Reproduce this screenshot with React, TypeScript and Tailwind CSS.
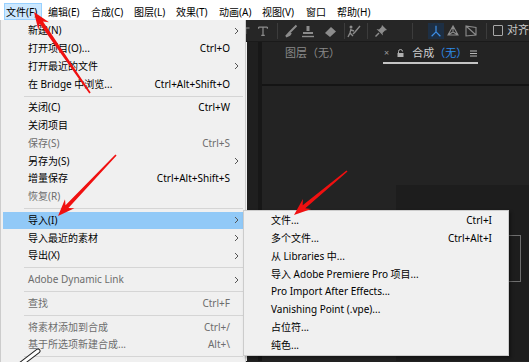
import type { ReactNode } from "react";

type Item =
  | "sep"
  | { label: string; shortcut?: string; sub?: boolean; disabled?: boolean; active?: boolean };

const fileMenu: Item[] = [
  { label: "新建(N)", sub: true },
  { label: "打开项目(O)...", shortcut: "Ctrl+O" },
  { label: "打开最近的文件", sub: true },
  { label: "在 Bridge 中浏览...", shortcut: "Ctrl+Alt+Shift+O" },
  "sep",
  { label: "关闭(C)", shortcut: "Ctrl+W" },
  { label: "关闭项目" },
  { label: "保存(S)", shortcut: "Ctrl+S", disabled: true },
  { label: "另存为(S)", sub: true },
  { label: "增量保存", shortcut: "Ctrl+Alt+Shift+S" },
  { label: "恢复(R)", disabled: true },
  "sep",
  { label: "导入(I)", sub: true, active: true },
  { label: "导入最近的素材", sub: true },
  { label: "导出(X)", sub: true },
  "sep",
  { label: "Adobe Dynamic Link", sub: true, disabled: true },
  "sep",
  { label: "查找", shortcut: "Ctrl+F", disabled: true },
  "sep",
  { label: "将素材添加到合成", shortcut: "Ctrl+/", disabled: true },
  { label: "基于所选项新建合成...", shortcut: "Alt+\\", disabled: true },
  "sep",
];

const importMenu: Item[] = [
  { label: "文件...", shortcut: "Ctrl+I" },
  { label: "多个文件...", shortcut: "Ctrl+Alt+I" },
  { label: "从 Libraries 中..." },
  { label: "导入 Adobe Premiere Pro 项目..." },
  { label: "Pro Import After Effects..." },
  { label: "Vanishing Point (.vpe)..." },
  { label: "占位符..." },
  { label: "纯色..." },
];

const menuBar = [
  { label: "文件(F)", w: "w-[42px]" },
  { label: "编辑(E)", w: "w-[43px]" },
  { label: "合成(C)", w: "w-[43px]" },
  { label: "图层(L)", w: "w-[42px]" },
  { label: "效果(T)", w: "w-[43px]" },
  { label: "动画(A)", w: "w-[43px]" },
  { label: "视图(V)", w: "w-[44px]" },
  { label: "窗口", w: "w-[31px]" },
  { label: "帮助(H)", w: "w-[44px]" },
];

const Chevron = () => (
  <svg width="5" height="8" viewBox="0 0 5 8">
    <path d="M1 1 L4 4 L1 7" fill="none" stroke="#555" strokeWidth="1" />
  </svg>
);

const MenuRows = ({ items, tail }: { items: Item[]; tail: string }) => (
  <>
    {items.map((it, i) =>
      it === "sep" ? (
        <div key={i} className="flex h-[6px] items-center pl-[23px] pr-[2px]">
          <div className="h-px w-full bg-[#d5d5d5]" />
        </div>
      ) : (
        <div
          key={i}
          className={`mx-[2px] flex h-[17.75px] items-center pl-[25px] ${it.active ? "bg-[#91c9f7]" : ""} ${
            it.disabled ? "text-[#6d6d6d]" : "text-black"
          }`}
        >
          <span className="flex-1 whitespace-nowrap">{it.label}</span>
          {it.shortcut && <span className="whitespace-nowrap">{it.shortcut}</span>}
          <span className={`flex ${tail} items-center justify-center`}>{it.sub && <Chevron />}</span>
        </div>
      )
    )}
  </>
);

const Icon = ({ children, w = "w-[16px]" }: { children: ReactNode; w?: string }) => (
  <div className={`flex ${w} h-[22px] items-center justify-center`}>
    <svg width="16" height="16" viewBox="0 0 16 16" fill="none" stroke="#8c8c8c" strokeWidth="1.4">
      {children}
    </svg>
  </div>
);

const Sep = ({ ml }: { ml: string }) => <div className={`${ml} h-[16px] w-px bg-[#3c3c3c]`} />;

// tapered screenshot arrow, tip at (x2, y2)
const Arrow = ({ x1, y1, x2, y2 }: { x1: number; y1: number; x2: number; y2: number }) => {
  const len = Math.hypot(x2 - x1, y2 - y1);
  const dx = (x2 - x1) / len;
  const dy = (y2 - y1) / len;
  const nx = -dy;
  const ny = dx;
  const bx = x2 - dx * 17;
  const by = y2 - dy * 17;
  const ix = x2 - dx * 13;
  const iy = y2 - dy * 13;
  const p = (x: number, y: number) => `${x.toFixed(1)},${y.toFixed(1)}`;
  const pts = [
    p(x1 + nx * 0.8, y1 + ny * 0.8),
    p(ix + nx * 2, iy + ny * 2),
    p(bx + nx * 6.5, by + ny * 6.5),
    p(x2, y2),
    p(bx - nx * 6.5, by - ny * 6.5),
    p(ix - nx * 2, iy - ny * 2),
    p(x1 - nx * 0.8, y1 - ny * 0.8),
  ].join(" ");
  return <polygon points={pts} fill="#f01010" />;
};

export default function App() {
  return (
    <div className="relative h-[362px] w-[529px] overflow-hidden bg-[#232323] font-['Noto_Sans','Noto_Sans_CJK_SC',sans-serif] text-[10px]">
      {/* 메뉴바 */}
      <div className="flex h-[20px] bg-white text-black">
        {menuBar.map((m, i) =>
          i === 0 ? (
            <div key={m.label} className="ml-[4px] mt-[3px] flex h-[17px] w-[38px] items-center border border-[#99d1ff] bg-[#cce8ff] pl-[1px] pt-[1px]">
              {m.label}
            </div>
          ) : (
            <div key={m.label} className={`${m.w} flex items-center pl-[6px] pt-[5px]`}>
              {m.label}
            </div>
          )
        )}
      </div>

      {/* 툴바 */}
      <div className="flex h-[22px] items-center border-b border-[#1a1a1a] bg-[#262626]">
        <div className="ml-[242px]" />
        <Icon w="w-[12px]">
          <path d="M10 4 H5 V12" />
        </Icon>
        <div className="ml-[2px]" />
        <Icon w="w-[14px]">
          <path d="M3 3.5 H13 M8 3.5 V13 M6 13 H10 M3 3.5 V5.5 M13 3.5 V5.5" />
        </Icon>
        <Sep ml="ml-[7px]" />
        <div className="ml-[5px]" />
        <Icon>
          <path d="M13.5 2.5 L7 9 M7 9 L3 13.5 L6.5 12 L8 10" strokeWidth="2" />
        </Icon>
        <div className="ml-[1px]" />
        <Icon>
          <path d="M6.5 3 H9.5 V8 H6.5 Z M3 9 H13 V11 H3 Z M2 13 H14" fill="#8c8c8c" stroke="none" />
          <path d="M2 13.5 H14" />
        </Icon>
        <div className="ml-[7px]" />
        <Icon>
          <polygon points="2,10 8,4 13,8.5 7,14" fill="#8c8c8c" stroke="none" />
        </Icon>
        <Sep ml="ml-[5px]" />
        <div className="ml-[1px]" />
        <Icon>
          <circle cx="5" cy="4" r="1.5" fill="#8c8c8c" stroke="none" />
          <path d="M5 6 L4 10 L2 14 M4 10 L7 13 M5 7 L8 8 M14 3 L9 9 L7 11" />
        </Icon>
        <Sep ml="ml-[5px]" />
        <div className="ml-[5px]" />
        <Icon>
          <path d="M9 2 L14 7 L12 7.5 L9.5 10 L10 12.5 L3.5 6 L6 6.5 L8.5 4 Z" fill="#8c8c8c" stroke="none" />
          <path d="M6 10 L2.5 13.5" />
        </Icon>
        <Sep ml="ml-[23px]" />
        <div className="ml-[16px] flex h-[16px] w-[18px] items-center justify-center bg-[#1d2f44]">
          <svg width="14" height="14" viewBox="0 0 16 16" fill="none" stroke="#3d8fe6" strokeWidth="1.4">
            <path d="M8 9 V2 M8 9 L3 14 M8 9 L13 14" />
          </svg>
        </div>
        <div className="ml-[1px]" />
        <Icon>
          <path d="M8 3 L3 12 H13 Z M8 3 V9 M3 12 L8 9 L13 12" strokeWidth="1.1" />
        </Icon>
        <div className="ml-[2px]" />
        <Icon>
          <path d="M3 3 L13 4.5 V12 L3 13 Z M3 3 L13 12" strokeWidth="1.1" />
        </Icon>
        <Sep ml="ml-[7px]" />
        <div className="ml-[7px] h-[11px] w-[11px] rounded-[1px] border border-[#a8a8a8]" />
        <span className="ml-[4px] whitespace-nowrap text-[11px] text-[#c8c8c8]">对齐</span>
      </div>

      {/* 패널 영역 */}
      <div className="flex h-[319px]">
        <div className="flex w-[262px]">
          <div className="w-[247px] bg-[#f0f0f0]" />
          <div className="w-[11px] bg-[#1f1f1f]" />
          <div className="w-[4px] bg-[#171717]" />
        </div>
        <div className="flex flex-1 flex-col">
          <div className="flex h-[42px] items-start pt-[2px] text-[11px]">
            <div className="ml-[23px] flex h-[18px] items-center text-[#8a8a8a]">图层（无）</div>
            <div className="ml-[43px] flex h-[20px] w-[95px] items-center border-b-2 border-[#c4c4c4] pl-[1px]">
              <span className="text-[9px] text-[#9a9a9a]">×</span>
              <svg className="ml-[8px]" width="7" height="8" viewBox="0 0 7 8">
                <path d="M1.5 4 V2.5 a2 2 0 0 1 4 0" fill="none" stroke="#b0b0b0" strokeWidth="1" />
                <rect x="0.5" y="4" width="6" height="4" fill="#b0b0b0" />
              </svg>
              <span className="ml-[8px] text-[#d0d0d0]">合成</span>
              <span className="text-[#2d8ceb]">（无）</span>
              <svg className="ml-[3px]" width="7" height="7" viewBox="0 0 7 7">
                <path d="M0 1 H7 M0 3.5 H7 M0 6 H7" stroke="#b8b8b8" strokeWidth="1" />
              </svg>
            </div>
          </div>
          <div className="h-[2px] bg-[#141414]" />
          <div className="flex flex-1 flex-col pt-[99px]">
            <div className="ml-[134px] flex-1 bg-[#1d1d1d] pt-[50px]">
              <div className="ml-[10px] h-[47px] w-[115px] border border-[#6e6e6e]" />
            </div>
          </div>
        </div>
      </div>

      {/* 파일 메뉴 */}
      <div className="absolute left-0 top-[20px] h-[350px] w-[246px] border-x border-[#cccccc] bg-[#f0f0f0] pt-[2px]">
        <MenuRows items={fileMenu} tail="w-[13px]" />
      </div>

      {/* 가져오기 하위 메뉴 */}
      <div className="absolute left-[243px] top-[210px] h-[146px] w-[266px] border border-[#cccccc] bg-[#f0f0f0] pt-[1px] shadow-[2px_2px_3px_rgba(0,0,0,0.35)]">
        <MenuRows items={importMenu} tail="w-[14px]" />
      </div>

      {/* 화살표 */}
      <svg className="pointer-events-none absolute left-0 top-0" width="529" height="362">
        <Arrow x1={90} y1={93} x2={34} y2={12} />
        <Arrow x1={116} y1={155} x2={58} y2={216} />
        <Arrow x1={347} y1={171} x2={294} y2={215} />
        <path d="M38 351 L21 364" stroke="#222" strokeWidth="5" strokeLinecap="round" />
        <path d="M38 351 L21 364" stroke="#fff" strokeWidth="3" strokeLinecap="round" />
      </svg>
    </div>
  );
}
